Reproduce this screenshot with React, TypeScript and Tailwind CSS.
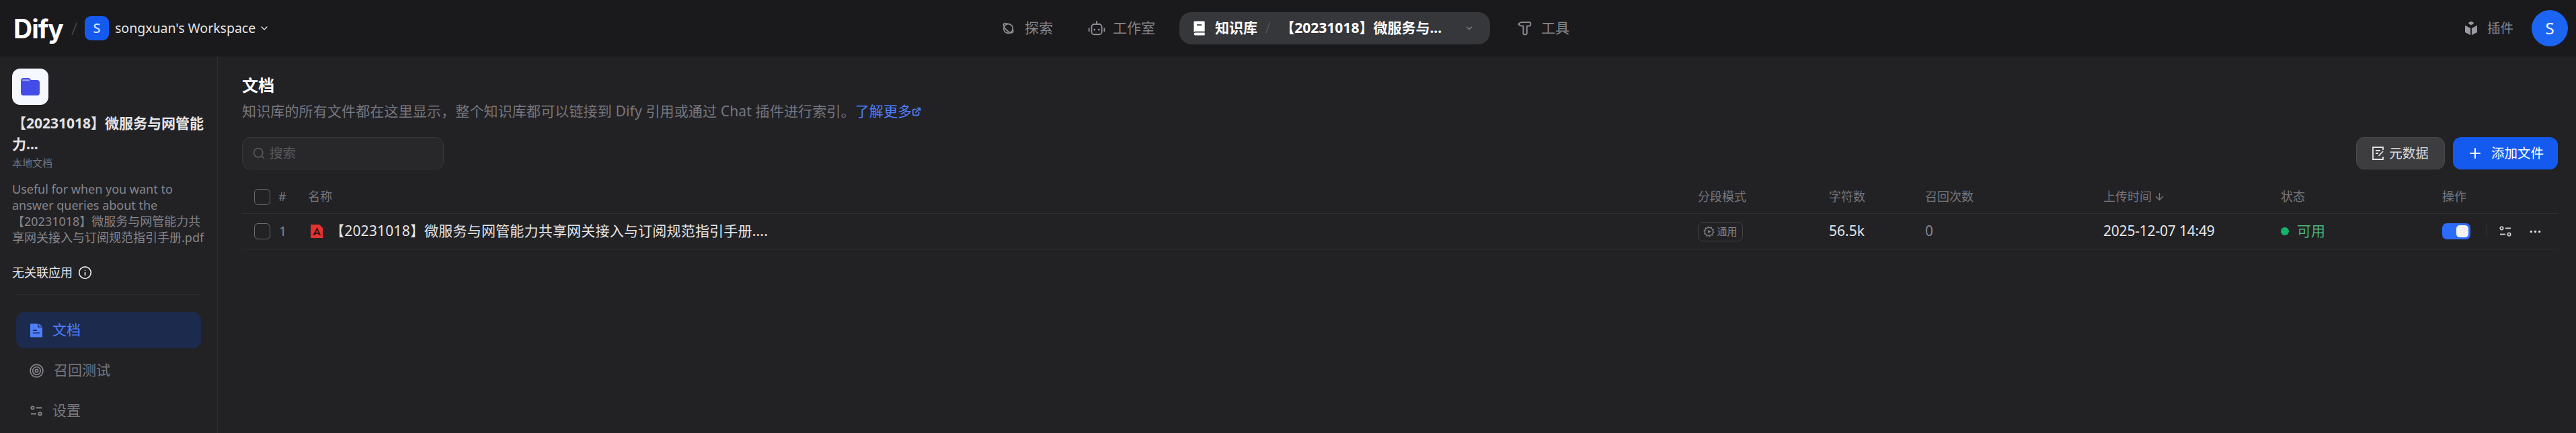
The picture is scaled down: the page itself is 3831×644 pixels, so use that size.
import { ChevronDown, Plus, Search, ArrowDown, Info, Ellipsis, ExternalLink } from 'lucide-react';

function ExploreIcon() {
  return (
    <svg viewBox="0 0 20 20" className="h-[21px] w-[21px]" fill="none" stroke="#8f8f96" strokeWidth="1.600">
      <circle cx="10" cy="10" r="6.500" />
      <path d="M4.200 2.800c-2 1.400-.6 5 2.600 8.500s7.200 5.600 9.200 4.200c1.400-1 .8-3-.4-5M4.200 2.800c1.200-.8 3-.4 5 .6" />
    </svg>
  );
}

function BotIcon() {
  return (
    <svg viewBox="0 0 24 24" className="h-[26px] w-[26px]" fill="none" stroke="#8f8f96" strokeWidth="1.700">
      <rect x="5" y="6.500" width="14" height="14" rx="3.500" />
      <path d="M12 6.500V3.500M1.500 11.500v5M22.500 11.500v5" />
      <circle cx="12" cy="2.800" r="1" fill="#8f8f96" stroke="none" />
      <circle cx="9" cy="14" r="1.200" fill="#8f8f96" stroke="none" />
      <circle cx="15" cy="14" r="1.200" fill="#8f8f96" stroke="none" />
    </svg>
  );
}

function BookIcon() {
  return (
    <svg viewBox="0 0 18 20" className="h-[24px] w-[21px]" fill="#ffffff">
      <path d="M3 1h12a1 1 0 0 1 1 1v12H4a2 2 0 0 0-1.900 1.300V2A1 1 0 0 1 3 1Z" />
      <path d="M4 15.500h12V19H4a1.750 1.750 0 0 1 0-3.500Z" />
      <rect x="6" y="5" width="6" height="1.500" fill="#36373b" />
    </svg>
  );
}

function HammerIcon() {
  return (
    <svg viewBox="0 0 20 20" className="h-[22px] w-[22px]" fill="none" stroke="#8f8f96" strokeWidth="1.600">
      <path d="M2 4.500c1.500-2 3-2.500 5-2.500h10.500l1 1v3l-1 1H13.500v10.500l-1 1h-3l-1-1V7H6C4.500 7 3.500 6.200 2 4.500Z" />
    </svg>
  );
}

function PluginIcon() {
  return (
    <svg viewBox="0 0 20 20" className="h-[24px] w-[24px]" fill="#9a9aa2">
      <path d="M10 1.500l3 1.500v1.500l-3 1.500-3-1.500V3l3-1.500Z" />
      <path d="M2.500 6.500L9.200 10v8.500l-6.700-3.500v-8.500Z" />
      <path d="M17.500 6.500L10.800 10v8.500l6.700-3.500v-8.500Z" />
    </svg>
  );
}

function FolderIcon() {
  return (
    <svg viewBox="0 0 28 26" className="h-[26px] w-[28px]">
      <path d="M4 0h7c2 0 3 1 4 3h9a4 4 0 0 1 4 4v15a4 4 0 0 1-4 4H4a4 4 0 0 1-4-4V4a4 4 0 0 1 4-4Z" fill="#444ce7" />
      <rect x="2" y="2.200" width="11" height="2" rx="1" fill="#a4a8f5" />
    </svg>
  );
}

function DocIcon() {
  return (
    <svg viewBox="0 0 18 20" className="h-[21px] w-[18px]">
      <path d="M0 0h11v5.500h7V20H0V0Z" fill="#4d7fff" />
      <path d="M12.500 0L18 4h-5.500V0Z" fill="#4d7fff" />
      <path d="M4 9h6v1.500H4zM4 13h10v1.500H4z" fill="#1b2a4d" />
    </svg>
  );
}

function TargetIcon() {
  return (
    <svg viewBox="0 0 20 20" className="h-[21px] w-[21px]" fill="none" stroke="#85858c" strokeWidth="1.600">
      <circle cx="10" cy="10" r="9" />
      <circle cx="10" cy="10" r="5.500" />
      <circle cx="10" cy="10" r="2" />
    </svg>
  );
}

function SlidersIcon({ color, size }: { color: string; size: string }) {
  return (
    <svg viewBox="0 0 18 18" className={size} fill="none" stroke={color} strokeWidth="1.800">
      <circle cx="3.500" cy="4.500" r="2.200" />
      <path d="M9 4.500h8M1 13.500h8" />
      <circle cx="14.500" cy="13.500" r="2.200" />
    </svg>
  );
}

function PdfIcon() {
  return (
    <svg viewBox="0 0 18 20" className="h-[20px] w-[18px]">
      <path d="M0 0h13l5 5v15H0V0Z" fill="#e5322f" />
      <path d="M9.500 6L13.500 14.500 8.500 12.500 4.500 15.500 9.500 6Z" fill="none" stroke="#2a1414" strokeWidth="1.800" />
    </svg>
  );
}

function GeneralIcon() {
  return (
    <svg viewBox="0 0 16 16" className="h-[17px] w-[17px]" fill="none">
      <circle cx="8" cy="8" r="5.800" stroke="#7d7d84" strokeWidth="1.300" />
      <circle cx="8" cy="8" r="6.800" stroke="#7d7d84" strokeWidth="1.200" strokeDasharray="2 2.270" />
      <path d="M6.500 5.500L11 8l-4.500 2.500v-5Z" fill="#7d7d84" />
    </svg>
  );
}

function MetaIcon() {
  return (
    <svg viewBox="0 0 18 20" className="h-[24px] w-[18px]" fill="none" stroke="#e4e4e6" strokeWidth="1.800">
      <path d="M16 5V1H1v18h15v-4" />
      <path d="M5 6h7M5 10h4M9.500 14l6.500-7" />
    </svg>
  );
}

function HeaderCell({ className, children }: { className: string; children: React.ReactNode }) {
  return <div className={`text-[18px] text-[#76767d] ${className}`}>{children}</div>;
}

export default function App() {
  return (
    <div className="flex h-[644px] w-[3831px] flex-col overflow-hidden bg-[#222225] [font-family:'Noto_Sans','Noto_Sans_CJK_SC',sans-serif]">
      <header className="flex h-[84px] shrink-0 items-center bg-[#1a1a1d] pl-[20px] pr-[12px]">
        <div className="flex flex-1 items-center">
          <span className="w-[78px] text-[39px] leading-none font-bold tracking-[-1px] text-white [font-family:'Inter',sans-serif]">Dify</span>
          <span className="ml-[8px] text-[26px] font-light text-[#4b4b50]">/</span>
          <div className="ml-[11px] flex h-[36px] w-[36px] items-center justify-center rounded-[9px] bg-[#155aef] text-[20px] font-medium text-[#d8e4ff]">S</div>
          <span className="ml-[9px] text-[19.500px] text-[#e4e4e6]">songxuan's Workspace</span>
          <ChevronDown className="ml-[5px] h-[16px] w-[16px] text-[#e4e4e6]" />
        </div>
        <nav className="mr-[16px] flex items-center">
          <div className="flex items-center gap-[14px] text-[21px] text-[#85858c]">
            <ExploreIcon />
            <span>探索</span>
          </div>
          <div className="ml-[52px] flex items-center gap-[11px] text-[21px] text-[#85858c]">
            <BotIcon />
            <span>工作室</span>
          </div>
          <div className="ml-[36px] flex h-[48px] w-[462px] items-center rounded-[18px] bg-[#36373b] pl-[19px]">
            <BookIcon />
            <span className="ml-[13px] text-[21px] font-bold text-white">知识库</span>
            <span className="ml-[12px] text-[21px] font-light text-[#5a5b60]">/</span>
            <span className="ml-[15px] text-[21px] font-bold text-white">【20231018】微服务与...</span>
            <ChevronDown className="ml-[34px] h-[14px] w-[14px] text-[#85858c]" />
          </div>
          <div className="ml-[40px] flex items-center gap-[14px] text-[21px] text-[#85858c]">
            <HammerIcon />
            <span>工具</span>
          </div>
        </nav>
        <div className="flex flex-1 items-center justify-end">
          <PluginIcon />
          <span className="ml-[12px] text-[19.500px] text-[#85858c]">插件</span>
          <div className="ml-[27px] flex h-[54px] w-[54px] items-center justify-center rounded-full bg-[#1c64f2] text-[24px] text-white">S</div>
        </div>
      </header>

      <div className="flex min-h-0 flex-1">
        <aside className="w-[324px] shrink-0 border-r border-[#303033] pt-[18px]">
          <div className="px-[18px]">
            <div className="flex h-[54px] w-[54px] items-center justify-center rounded-[12px] bg-[#f5f8ff]">
              <FolderIcon />
            </div>
            <h2 className="mt-[12px] w-[296px] text-[21px] leading-[31px] font-bold text-[#e4e4e6]">【20231018】微服务与网管能力...</h2>
            <div className="mt-[1px] text-[15px] leading-[22px] text-[#76767d]">本地文档</div>
            <p className="mt-[16px] w-[292px] text-[18px] leading-[24px] text-[#85858c]">
              Useful for when you want to answer queries about the 【20231018】微服务与网管能力共享网关接入与订阅规范指引手册.pdf
            </p>
            <div className="mt-[28px] flex items-center gap-[8px] text-[18px] leading-[24px] text-[#e4e4e6]">
              <span>无关联应用</span>
              <Info className="h-[21px] w-[21px]" />
            </div>
          </div>
          <div className="mx-[24px] mt-[21px] h-[1px] bg-[#37373a]" />
          <nav className="mt-[25px] flex flex-col gap-[6px] px-[24px]">
            <div className="flex h-[54px] items-center gap-[15px] rounded-[12px] bg-[#1b2a4d] pl-[21px] text-[21px] text-[#4d7fff]">
              <DocIcon />
              <span>文档</span>
            </div>
            <div className="flex h-[54px] items-center gap-[15px] pl-[20px] text-[21px] text-[#76767d]">
              <TargetIcon />
              <span>召回测试</span>
            </div>
            <div className="flex h-[54px] items-center gap-[15px] pl-[21px] text-[21px] text-[#76767d]">
              <SlidersIcon color="#85858c" size="h-[18px] w-[18px]" />
              <span>设置</span>
            </div>
          </nav>
        </aside>

        <main className="min-w-0 flex-1 pl-[36px] pr-[27px] pt-[25px]">
          <h1 className="text-[24px] leading-[36px] font-bold text-white">文档</h1>
          <p className="mt-[7px] flex items-center text-[21px] leading-[27px] tracking-[0.15px] text-[#76767d]">
            知识库的所有文件都在这里显示，整个知识库都可以链接到 Dify 引用或通过 Chat 插件进行索引。
            <span className="text-[#4d7fff]">了解更多</span>
            <ExternalLink className="h-[14px] w-[14px] text-[#4d7fff]" strokeWidth={3} />
          </p>

          <div className="mt-[25px] flex items-center justify-between">
            <div className="flex h-[48px] w-[300px] items-center gap-[6px] rounded-[12px] border border-[#38383b] bg-[#28282b] pl-[14px] text-[19.500px] text-[#58585d]">
              <Search className="h-[20px] w-[20px]" />
              <span>搜索</span>
            </div>
            <div className="flex items-center gap-[12px]">
              <div className="flex h-[48px] w-[132px] items-center justify-center gap-[7px] rounded-[12px] border border-[#4a4a4d] bg-[#3d3d40] text-[19.500px] text-[#d9d9dc]">
                <MetaIcon />
                <span>元数据</span>
              </div>
              <div className="flex h-[48px] w-[156px] items-center justify-center gap-[12px] rounded-[12px] bg-[#155aef] text-[19.500px] text-white">
                <Plus className="h-[24px] w-[24px]" />
                <span>添加文件</span>
              </div>
            </div>
          </div>

          <div className="mt-[16px] flex h-[50px] items-center border-b border-[#2f2f32]">
            <div className="flex w-[98px] items-center pl-[18px]">
              <div className="h-[24px] w-[24px] rounded-[6px] border border-[#6a6a70]" />
              <span className="ml-[12px] text-[18px] text-[#76767d]">#</span>
            </div>
            <HeaderCell className="flex-1">名称</HeaderCell>
            <HeaderCell className="w-[195px]">分段模式</HeaderCell>
            <HeaderCell className="w-[143px]">字符数</HeaderCell>
            <HeaderCell className="w-[265px]">召回次数</HeaderCell>
            <HeaderCell className="flex w-[264px] items-center gap-[3px]">
              上传时间
              <ArrowDown className="h-[17px] w-[17px]" />
            </HeaderCell>
            <HeaderCell className="w-[240px]">状态</HeaderCell>
            <HeaderCell className="w-[172px]">操作</HeaderCell>
          </div>

          <div className="flex h-[53px] items-center border-b border-[#2f2f32]">
            <div className="flex w-[98px] items-center pl-[18px]">
              <div className="h-[24px] w-[24px] rounded-[6px] border border-[#6a6a70]" />
              <span className="ml-[13px] text-[19.500px] text-[#85858c]">1</span>
            </div>
            <div className="flex flex-1 items-center pl-[4px]">
              <PdfIcon />
              <span className="ml-[11px] text-[21px] tracking-[0.2px] text-[#e4e4e6]">【20231018】微服务与网管能力共享网关接入与订阅规范指引手册....</span>
            </div>
            <div className="w-[195px]">
              <div className="flex h-[29px] w-[67px] items-center justify-center gap-[3px] rounded-[8px] border border-[#414145] text-[15px] text-[#85858c]">
                <GeneralIcon />
                <span>通用</span>
              </div>
            </div>
            <div className="w-[143px] text-[21px] text-[#e4e4e6]">56.5k</div>
            <div className="w-[265px] text-[21px] text-[#85858c]">0</div>
            <div className="w-[264px] text-[21px] tracking-[-0.2px] text-[#e4e4e6]">2025-12-07 14:49</div>
            <div className="flex w-[240px] items-center gap-[12px] text-[21px] text-[#47b77c]">
              <span className="h-[12px] w-[12px] rounded-full bg-[#17b26a]" />
              <span>可用</span>
            </div>
            <div className="flex w-[172px] items-center">
              <div className="flex h-[24px] w-[42px] items-center justify-end rounded-[7px] bg-[#2c6bff] pr-[3px]">
                <div className="h-[18px] w-[18px] rounded-[5px] bg-[#f2f2f4]" />
              </div>
              <div className="ml-[24px] h-[18px] w-[1px] bg-[#3a3a3d]" />
              <div className="ml-[18px]">
                <SlidersIcon color="#c9c9cd" size="h-[18px] w-[18px]" />
              </div>
              <Ellipsis className="ml-[25px] h-[21px] w-[21px] text-[#d9d9dc]" />
            </div>
          </div>
        </main>
      </div>
    </div>
  );
}
